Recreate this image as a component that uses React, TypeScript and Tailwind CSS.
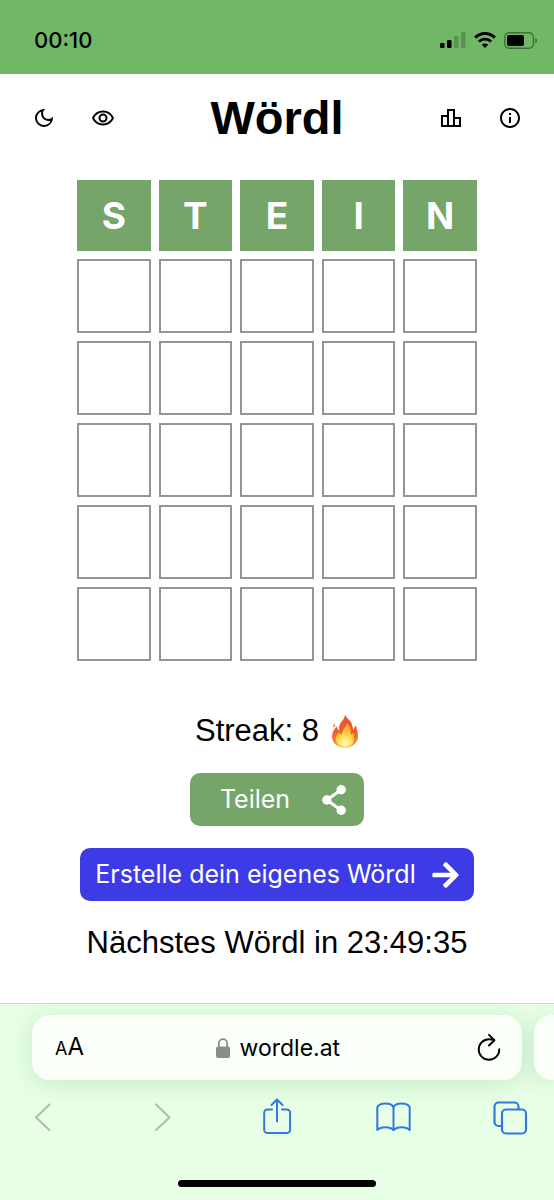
import React, { useState } from "react";
import { FaArrowRight } from "react-icons/fa";
import {
  MdInfoOutline,
  MdOutlineDarkMode,
  MdOutlineLeaderboard,
  MdOutlineRemoveRedEye,
} from "react-icons/md";

const WORD_LENGTH = 5;
const MAX_GUESSES = 6;

const StatusBar = () => (
  <div className="flex h-[74px] items-start justify-between bg-[#70b865] pt-6 pr-4 pl-[34px] text-black">
    <span className="font-['Inter',sans-serif] text-[22px] leading-8 font-medium">
      00:10
    </span>
    <div className="flex h-8 items-center gap-2">
      <svg width="26" height="16" viewBox="0 0 26 16" fill="currentColor">
        <rect x="0" y="11" width="4.6" height="5" rx="1.2" />
        <rect x="7" y="8" width="4.6" height="8" rx="1.2" />
        <rect x="14" y="4" width="4.6" height="12" rx="1.2" opacity="0.2" />
        <rect x="21" y="0" width="4.6" height="16" rx="1.2" opacity="0.2" />
      </svg>
      <svg width="22" height="16" viewBox="0 0 22 16" fill="none">
        <path
          d="M1.2 5.6a13.8 13.8 0 0 1 19.6 0"
          stroke="currentColor"
          strokeWidth="3"
        />
        <path
          d="M4.8 9.6a8.8 8.8 0 0 1 12.4 0"
          stroke="currentColor"
          strokeWidth="2.8"
        />
        <path
          d="M11 16l-3.2-3.2a4.6 4.6 0 0 1 6.400 0z"
          fill="currentColor"
        />
      </svg>
      <svg width="34" height="17" viewBox="0 0 34 17" fill="none">
        <rect
          x="0.8"
          y="0.8"
          width="28.6"
          height="15.4"
          rx="4.4"
          stroke="currentColor"
          strokeOpacity="0.4"
          strokeWidth="1.4"
        />
        <rect x="3" y="3" width="17" height="11" rx="2" fill="currentColor" />
        <path d="M31.4 5.8c2 .8 2 4.6 0 5.4z" fill="currentColor" opacity="0.5" />
      </svg>
    </div>
  </div>
);

const Header = () => (
  <header className="flex items-center justify-between px-8 py-5">
    <div className="flex gap-[35px]">
      <button aria-label="Dunkelmodus">
        <MdOutlineDarkMode size={24} />
      </button>
      <button aria-label="Kontrastmodus">
        <MdOutlineRemoveRedEye size={24} />
      </button>
    </div>
    <h1 className="text-[47px] leading-[48px] font-bold">Wördl</h1>
    <div className="flex gap-[35px]">
      <button aria-label="Statistik">
        <MdOutlineLeaderboard size={24} />
      </button>
      <button aria-label="Info">
        <MdInfoOutline size={24} />
      </button>
    </div>
  </header>
);

const Board = ({ guesses }: { guesses: string[] }) => {
  const emptyRows = MAX_GUESSES - guesses.length;

  return (
    <div className="mt-[18px] grid w-full max-w-[400px] grid-cols-5 gap-2">
      {guesses.map((guess) =>
        guess.split("").map((letter, i) => (
          <div
            key={guess + i}
            className="flex h-[71px] items-center justify-center bg-[#75a568] font-['Inter',sans-serif] text-[37px] font-bold text-white"
          >
            {letter}
          </div>
        ))
      )}
      {Array.from({ length: emptyRows * WORD_LENGTH }).map((_, i) => (
        <div key={i} className="h-[74px] border-2 border-[#949494]" />
      ))}
    </div>
  );
};

const Flame = () => (
  <svg width="28" height="34" viewBox="0 0 28 34" role="img" aria-label="Feuer">
    <defs>
      <linearGradient id="flame-outer" x1="0" y1="0" x2="0" y2="1">
        <stop offset="0" stopColor="#e8502e" />
        <stop offset="0.55" stopColor="#f0602a" />
        <stop offset="1" stopColor="#f9a13a" />
      </linearGradient>
      <radialGradient id="flame-inner" cx="0.5" cy="0.9" r="0.8">
        <stop offset="0" stopColor="#fffbd0" />
        <stop offset="0.4" stopColor="#ffe458" />
        <stop offset="1" stopColor="#fba131" />
      </radialGradient>
    </defs>
    <path
      d="M14 0.5c-0.6 5.2-3.8 6.8-5.4 10.4-0.9 2.1-0.5 4.2-0.3 5.8-1.5-0.8-2.1-2.4-2.1-4.4C3.4 14.6 1 18 1 22.4 1 29 6.6 33.5 14 33.5S27 28.8 27 22.2c0-4-1.4-6.7-1.8-10.7-1.7 1-2.3 2.7-2.4 4.8-1.2-2.4-1.2-5.2-2.9-8.3C18.4 5.2 15.2 4.3 14 0.5z"
      fill="url(#flame-outer)"
    />
    <path
      d="M3.6 9.6c-1.1 1.2-1.4 2.6-0.9 4.1 1.3-1 1.7-2.5 0.9-4.1z"
      fill="#f0602a"
    />
    <path
      d="M15.5 9c0.5 3.8-4.8 6.4-4.6 11.8-1.5-0.5-2.4-1.4-2.9-2.5-2 2-3.2 4.2-3.2 6.6 0 4.8 3.9 8 9.1 8s9.300-3.200 9.300-8c0-2.200-0.700-4-0.900-6-1 0.500-1.800 1.200-2.300 2.400C19.600 16.600 19.700 12.200 15.500 9z"
      fill="url(#flame-inner)"
    />
  </svg>
);

const ShareIcon = () => (
  <svg width="24" height="30" viewBox="0 0 24 30" fill="currentColor">
    <path
      d="M19.2 4.8L4.8 15l14.4 10.2"
      fill="none"
      stroke="currentColor"
      strokeWidth="3.2"
    />
    <circle cx="19.2" cy="4.8" r="4.7" />
    <circle cx="4.8" cy="15" r="4.7" />
    <circle cx="19.2" cy="25.2" r="4.7" />
  </svg>
);

const BrowserBar = () => {
  const [url, setUrl] = useState("wordle.at");

  return (
    <footer className="mt-auto border-t border-[#c9dcc8] bg-[#e7ffe5] pt-[11px] pb-[13px] font-['Inter',sans-serif]">
      <div className="flex gap-3 pl-8">
        <div className="flex h-[65px] flex-1 items-center justify-between rounded-[18px] bg-[#fafffa] pr-5 pl-[23px] text-black shadow-[0_3px_22px_rgba(60,120,60,0.18)]">
          <button aria-label="Darstellung" className="w-8 text-left leading-8">
            <span className="text-[18px]">A</span>
            <span className="text-[24px]">A</span>
          </button>
          <label className="flex items-center gap-[10px]">
            <svg width="14" height="20" viewBox="0 0 14 20" fill="none">
              <rect y="8.6" width="14" height="11.4" rx="2" fill="#8a8c8a" />
              <path
                d="M2.9 9V5.2a4.1 4.1 0 0 1 8.2 0V9"
                stroke="#8a8c8a"
                strokeWidth="1.7"
              />
            </svg>
            <input
              aria-label="Adresse"
              value={url}
              onChange={(e) => setUrl(e.target.value)}
              className="w-[108px] bg-transparent text-[23px] leading-8 outline-none"
            />
          </label>
          <button aria-label="Neu laden">
            <svg
              width="26"
              height="28"
              viewBox="0 0 26 28"
              fill="none"
              stroke="currentColor"
              strokeWidth="1.9"
              strokeLinecap="round"
              strokeLinejoin="round"
            >
              <path d="M23.3 15.300A10.300 10.300 0 1 1 13 5.200c1.800 0 3.700.3 5.200.9" />
              <path d="M13 .9l5.400 5.300-5.400 5.300" />
            </svg>
          </button>
        </div>
        <div className="w-5 rounded-l-[18px] bg-[#fafffa] shadow-[0_3px_22px_rgba(60,120,60,0.18)]" />
      </div>

      <nav className="mt-[18px] flex items-center justify-between px-[25px] text-[#3478dd]">
        <button aria-label="Zurück" className="text-[#adc2ac]">
          <svg width="36" height="38" viewBox="0 0 36 38" fill="none" stroke="currentColor" strokeWidth="2.2" strokeLinecap="round" strokeLinejoin="round">
            <path d="M24.5 6.500L11 19.500l13.500 12.500" />
          </svg>
        </button>
        <button aria-label="Vor" className="text-[#adc2ac]">
          <svg width="36" height="38" viewBox="0 0 36 38" fill="none" stroke="currentColor" strokeWidth="2.2" strokeLinecap="round" strokeLinejoin="round">
            <path d="M14 6.500l13.500 13L14 32" />
          </svg>
        </button>
        <button aria-label="Teilen">
          <svg width="36" height="38" viewBox="0 0 36 38" fill="none" stroke="currentColor" strokeWidth="2" strokeLinecap="round" strokeLinejoin="round">
            <path d="M13 11.500H8.500a3.300 3.300 0 0 0-3.300 3.300v17a3.300 3.300 0 0 0 3.300 3.300h19.300a3.300 3.300 0 0 0 3.300-3.300v-17a3.300 3.300 0 0 0-3.300-3.300H23" />
            <path d="M18 23.500V1.500M12.500 7L18 1.500 23.500 7" />
          </svg>
        </button>
        <button aria-label="Lesezeichen">
          <svg width="36" height="38" viewBox="0 0 36 38" fill="none" stroke="currentColor" strokeWidth="2" strokeLinecap="round" strokeLinejoin="round">
            <path d="M17.500 9C15 4.400 4 4.400 1.300 9v23c3.500-3.800 12.700-3.800 16.200 0 3.500-3.800 12.700-3.800 16.200 0V9C31 4.400 20 4.400 17.500 9z" />
            <path d="M17.500 9v23" />
          </svg>
        </button>
        <button aria-label="Tabs">
          <svg width="36" height="38" viewBox="0 0 36 38" fill="none" stroke="currentColor" strokeWidth="2.2" strokeLinejoin="round">
            <path d="M9 28H5.500a4 4 0 0 1-4-4V8.500a4 4 0 0 1 4-4h16a4 4 0 0 1 4 4V11.500" />
            <rect x="9" y="11.500" width="24" height="24" rx="4" />
          </svg>
        </button>
      </nav>

      <div className="mx-auto mt-11 h-[7px] w-[198px] rounded-full bg-black" />
    </footer>
  );
};

const App = () => {
  const [guesses] = useState<string[]>(["STEIN"]);

  return (
    <div className="flex min-h-screen flex-col overflow-hidden bg-white font-['Liberation_Sans',Arial,sans-serif] text-black">
      <StatusBar />
      <Header />
      <main className="flex flex-col items-center px-6 pb-10">
        <Board guesses={guesses} />
        <div className="mt-[50px] flex flex-col items-center gap-[22px]">
          <p className="flex items-center gap-3 text-[31px] leading-10">
            Streak: 8 <Flame />
          </p>
          <button className="flex h-[53px] items-center gap-8 rounded-[10px] bg-[#75a568] pr-[18px] pl-[30px] font-['Inter',sans-serif] text-[25px] text-white">
            Teilen
            <ShareIcon />
          </button>
          <button className="flex h-[53px] items-center gap-4 rounded-[10px] bg-[#3d3be5] px-[15px] font-['Inter',sans-serif] text-[25px] text-white">
            Erstelle dein eigenes Wördl
            <FaArrowRight size={30} className="w-[27px]" />
          </button>
          <p className="text-[31px] leading-10">Nächstes Wördl in 23:49:35</p>
        </div>
      </main>
      <BrowserBar />
    </div>
  );
};

export default App;
